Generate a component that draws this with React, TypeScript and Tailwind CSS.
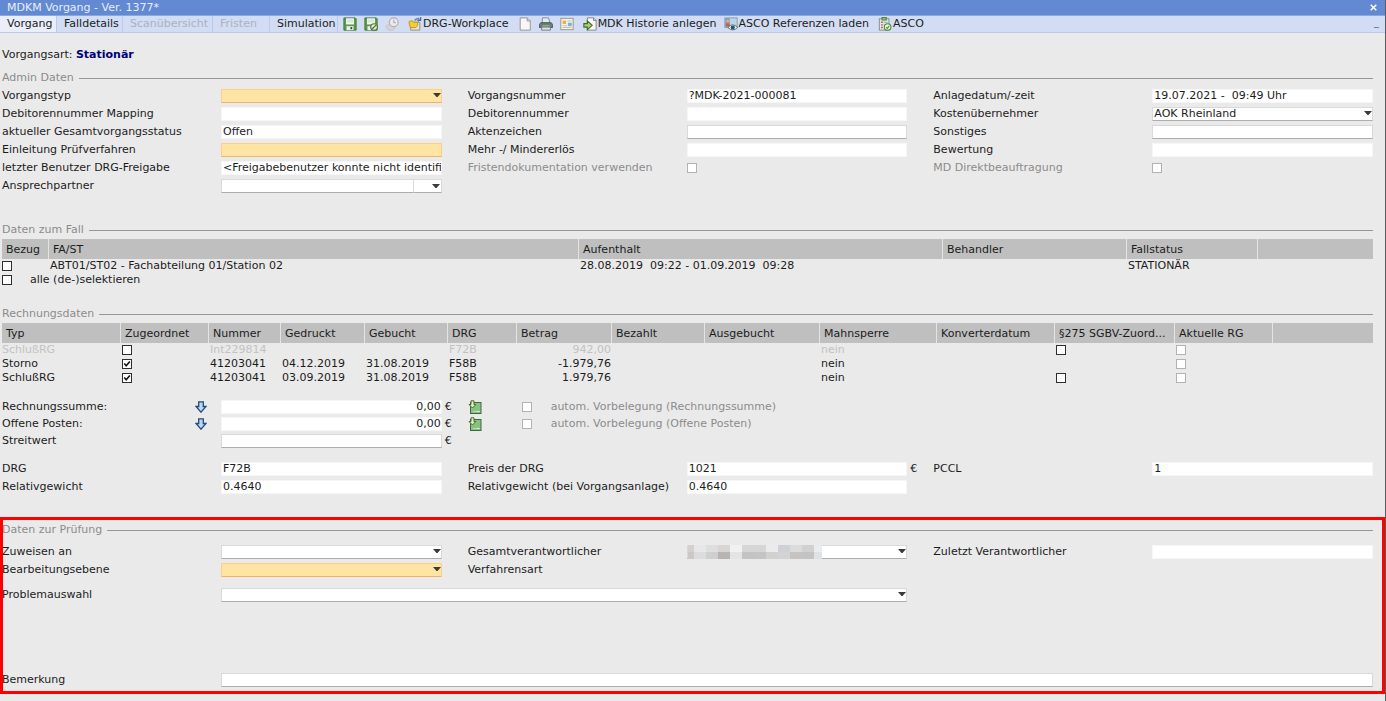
import React, { Fragment } from 'react';

type Tone = 'plain' | 'edit' | 'required';

interface FieldDef {
  id: string;
  label: string;
  value?: string;
  kind?: 'text' | 'select' | 'combo' | 'check' | 'none';
  tone?: Tone;
  unit?: string;
  masked?: boolean;
}

const GRID =
  'grid grid-cols-[219px_1fr_26px_219px_1fr_26px_219px_1fr] auto-rows-[14px] gap-y-1 items-center';

const toneClass: Record<Tone, string> = {
  plain: 'border-[#f6f6f6] bg-white',
  edit: 'border-[#d9d9d9] border-b-[#adadad] bg-white',
  required: 'border-[#fbcf87] border-b-[#f0b36b] bg-[#ffe4a4]',
};

const adminRows: (FieldDef | null)[][] = [
  [
    { id: 'vorgangstyp', label: 'Vorgangstyp', kind: 'select', tone: 'required' },
    { id: 'vorgangsnummer', label: 'Vorgangsnummer', value: '?MDK-2021-000081' },
    { id: 'anlage', label: 'Anlagedatum/-zeit', value: '19.07.2021 -  09:49 Uhr' },
  ],
  [
    { id: 'debMapping', label: 'Debitorennummer Mapping' },
    { id: 'debitor', label: 'Debitorennummer' },
    { id: 'kosten', label: 'Kostenübernehmer', value: 'AOK Rheinland', kind: 'select', tone: 'edit' },
  ],
  [
    { id: 'status', label: 'aktueller Gesamtvorgangsstatus', value: 'Offen' },
    { id: 'akten', label: 'Aktenzeichen', tone: 'edit' },
    { id: 'sonstiges', label: 'Sonstiges', tone: 'edit' },
  ],
  [
    { id: 'einleitung', label: 'Einleitung Prüfverfahren', tone: 'required' },
    { id: 'erloes', label: 'Mehr -/ Mindererlös' },
    { id: 'bewertung', label: 'Bewertung' },
  ],
  [
    {
      id: 'freigabe',
      label: 'letzter Benutzer DRG-Freigabe',
      value: '<Freigabebenutzer konnte nicht identifi',
    },
    { id: 'fristendoku', label: 'Fristendokumentation verwenden', kind: 'check' },
    { id: 'direkt', label: 'MD Direktbeauftragung', kind: 'check' },
  ],
  [{ id: 'partner', label: 'Ansprechpartner', kind: 'combo', tone: 'edit' }, null, null],
];

const drgRows: (FieldDef | null)[][] = [
  [
    { id: 'drg', label: 'DRG', value: 'F72B' },
    { id: 'preis', label: 'Preis der DRG', value: '1021', unit: '€' },
    { id: 'pccl', label: 'PCCL', value: '1' },
  ],
  [
    { id: 'relativ', label: 'Relativgewicht', value: '0.4640' },
    { id: 'relativAnlage', label: 'Relativgewicht (bei Vorgangsanlage)', value: '0.4640' },
    null,
  ],
];

const checkRows: (FieldDef | null)[][] = [
  [
    { id: 'zuweisen', label: 'Zuweisen an', kind: 'select', tone: 'edit' },
    { id: 'gesamt', label: 'Gesamtverantwortlicher', kind: 'select', tone: 'edit', masked: true },
    { id: 'zuletzt', label: 'Zuletzt Verantwortlicher' },
  ],
  [
    { id: 'ebene', label: 'Bearbeitungsebene', kind: 'select', tone: 'required' },
    { id: 'verfahren', label: 'Verfahrensart', kind: 'none' },
    null,
  ],
];

const invoices = [
  { typ: 'SchlußRG', zu: false, nr: 'Int229814', gedruckt: '', gebucht: '', drg: 'F72B', betrag: '942,00', par: true, off: true },
  { typ: 'Storno', zu: true, nr: '41203041', gedruckt: '04.12.2019', gebucht: '31.08.2019', drg: 'F58B', betrag: '-1.979,76', par: false, off: false },
  { typ: 'SchlußRG', zu: true, nr: '41203041', gedruckt: '03.09.2019', gebucht: '31.08.2019', drg: 'F58B', betrag: '1.979,76', par: true, off: false },
];

const Checkbox: React.FC<{ id?: string; label?: string; checked?: boolean; disabled?: boolean }> = ({
  id,
  label,
  checked,
  disabled,
}) => (
  <span className="relative block size-[10px] shrink-0">
    <input
      id={id}
      type="checkbox"
      aria-label={label}
      defaultChecked={checked}
      disabled={disabled}
      className="peer block size-[10px] appearance-none border border-[#2e2e2e] bg-white disabled:border-[#b2b2b2]"
    />
    <svg
      viewBox="0 0 10 10"
      className="pointer-events-none absolute inset-0 hidden size-[10px] peer-checked:block"
    >
      <path d="M2.3 4.6 L4.2 6.8 L7.8 2.6" fill="none" stroke="#111" strokeWidth="1.6" />
    </svg>
  </span>
);

const Caret = () => (
  <svg
    viewBox="0 0 8 4"
    className="pointer-events-none absolute top-[4px] right-[1px] h-[4px] w-[8px]"
  >
    <path d="M0 0h8L4.5 4h-1z" fill="#3a3a3a" />
  </svg>
);

const maskTop = ['#d5d0d0', '#e6e7e8', '#dedede', '#d9d5d3', '#f1f1f1', '#d6d6d7', '#d5d6d7', '#ebebeb', '#d0d1d6', '#dcdcdc', '#d1d1d2', '#e9ebec'];
const maskBottom = ['#ccc8c8', '#dcdcdd', '#cfcfcf', '#b9b4b4', '#e2e4e6', '#c3c3c3', '#c4c4c4', '#d1d1d1', '#d3d3d3', '#c5c4c3', '#c3c3c3', '#dee2e5'];

const Mask = () => (
  <svg
    viewBox="0 0 134 14"
    className="pointer-events-none absolute top-0 left-[1px] h-[14px] w-[134px]"
    shapeRendering="crispEdges"
  >
    {maskTop.map((c, i) => (
      <Fragment key={i}>
        <rect x={i * 12 - 6} y="0" width={i === 11 ? 8 : 12} height="7" fill={c} />
        <rect x={i * 12 - 6} y="7" width={i === 11 ? 8 : 12} height="7" fill={maskBottom[i]} />
      </Fragment>
    ))}
  </svg>
);

const SelectBox: React.FC<{ id: string; value?: string; tone?: Tone; masked?: boolean }> = ({
  id,
  value = '',
  tone = 'edit',
  masked,
}) => (
  <div className="relative">
    <select
      id={id}
      defaultValue={value}
      className={`block h-[14px] w-full appearance-none border pl-[1px] leading-[12px] ${toneClass[tone]}`}
    >
      <option value={value}>{value}</option>
    </select>
    {masked && <Mask />}
    <Caret />
  </div>
);

const TextBox: React.FC<{ id: string; value?: string; tone?: Tone; right?: boolean }> = ({
  id,
  value = '',
  tone = 'plain',
  right,
}) => (
  <input
    id={id}
    type="text"
    defaultValue={value}
    className={`block h-[14px] w-full min-w-0 border pb-[2px] pl-[1px] leading-[12px] ${right ? 'text-right' : ''} ${toneClass[tone]}`}
  />
);

const Control: React.FC<{ field: FieldDef }> = ({ field }) => {
  const { id, label, value, kind = 'text', tone, masked } = field;
  if (kind === 'none') return <span />;
  if (kind === 'check') return <Checkbox id={id} disabled />;
  if (kind === 'select') return <SelectBox id={id} value={value} tone={tone} masked={masked} />;
  if (kind === 'combo') {
    return (
      <div className="flex">
        <TextBox id={id} tone={tone} />
        <button
          type="button"
          aria-label={`${label} auswählen`}
          className={`relative h-[14px] w-[28px] shrink-0 border border-l-0 ${toneClass.edit}`}
        >
          <Caret />
        </button>
      </div>
    );
  }
  return <TextBox id={id} value={value} tone={tone} />;
};

const FormGrid: React.FC<{ rows: (FieldDef | null)[][]; className?: string }> = ({
  rows,
  className = '',
}) => (
  <div className={`${GRID} ${className}`}>
    {rows.map((row, r) =>
      row.map((field, i) => (
        <Fragment key={`${r}-${i}`}>
          {field && field.kind === 'none' && <span>{field.label}</span>}
          {field && field.kind !== 'none' && (
            <label htmlFor={field.id} className={field.kind === 'check' ? 'text-[#8c8c8c]' : ''}>
              {field.label}
            </label>
          )}
          {!field && <span />}
          {field ? <Control field={field} /> : <span />}
          {i < 2 && <span className="pl-[3px]">{field?.unit}</span>}
        </Fragment>
      )),
    )}
  </div>
);

const Heading: React.FC<{ children: string; className?: string }> = ({ children, className = '' }) => (
  <div className={`flex items-center gap-[5px] ${className}`}>
    <h2 className="text-[#8c8c8c]">{children}</h2>
    <div className="h-px flex-1 bg-[#979797]" />
  </div>
);

// Toolbar glyphs
const Disk = () => (
  <>
    <path d="M1 1h13l1 1v13H1z" fill="#5d9a51" stroke="#3c7436" />
    <rect x="3.5" y="1.5" width="9" height="7" fill="#f4f8f3" />
    <path d="M4.5 3.5h7M4.5 5.5h7" stroke="#c9d5c7" />
    <rect x="4" y="10.5" width="8" height="4.5" fill="#e9efe8" />
    <rect x="8.5" y="11.5" width="2" height="2.5" fill="#2d5a2a" />
  </>
);

const Icon: React.FC<{ children: React.ReactNode }> = ({ children }) => (
  <svg viewBox="0 0 16 16" className="size-[14px] shrink-0" aria-hidden="true">
    {children}
  </svg>
);

const SaveIcon = () => (
  <Icon>
    <Disk />
  </Icon>
);

const SaveCheckIcon = () => (
  <Icon>
    <Disk />
    <circle cx="11.5" cy="11.5" r="3.8" fill="#dfe9d5" stroke="#557a38" strokeWidth="1.4" />
    <path d="M9.3 13.7l4.4-4.4" stroke="#557a38" strokeWidth="1.5" />
  </Icon>
);

const ClockIcon = () => (
  <Icon>
    <path d="M1 11l5-4 6 5-3 3H4z" fill="#d4d4d4" stroke="#c2c2c2" />
    <circle cx="10" cy="6" r="5" fill="#ececec" stroke="#b0b0b0" strokeWidth="1.3" />
    <path d="M10 3v3.5h2.500" fill="none" stroke="#9a9a9a" />
  </Icon>
);

const FolderIcon = () => (
  <Icon>
    <path d="M7 3l5-2v5" fill="#cbdcef" stroke="#8ba3bf" />
    <path d="M8 4q2-3 6-1.500M14.500 0v4h-4" fill="none" stroke="#41719f" strokeWidth="1.300" />
    <path d="M3 6h10.500v9H3z" fill="#e6e2cf" stroke="#8d8a72" />
    <path d="M1 6l1-1.500h3.500L6.500 6H11v3.500l-2 2.500H2.500z" fill="#f4ce31" stroke="#b8961f" />
  </Icon>
);

const PageIcon = () => (
  <Icon>
    <path d="M2.5 1h8l3.500 3.500V15H2.500z" fill="#f7f7f7" stroke="#8b8b8b" />
    <path d="M10.500 1v3.500H14" fill="#dcdcdc" stroke="#8b8b8b" />
  </Icon>
);

const PrintIcon = () => (
  <Icon>
    <path d="M4 1h7l1.500 6H3.500z" fill="#e3eaf0" stroke="#7d868c" />
    <path d="M2 6.500h12l1.500 2V12h-15V8.500z" fill="#6d7a80" stroke="#46535a" />
    <path d="M3 11.500h10V15H3z" fill="#dfe4e6" stroke="#6b767b" />
    <path d="M4 10h8" stroke="#7cc16f" strokeWidth="1.500" />
  </Icon>
);

const FormIcon = () => (
  <Icon>
    <rect x="1" y="1.500" width="14" height="13" fill="#f5f3e8" stroke="#8f8f85" />
    <rect x="3" y="4" width="4" height="4" fill="#e7b04d" />
    <path d="M8.500 4.500H13M3 10h5M3 12h10" stroke="#b5baba" />
    <rect x="9" y="6.500" width="4.500" height="4" fill="#7fb0d8" />
  </Icon>
);

const ImportIcon = () => (
  <Icon>
    <path d="M5 1h7l3 3v11H5z" fill="#f7f7f7" stroke="#7d7d7d" />
    <path d="M12 1v3h3" fill="none" stroke="#7d7d7d" />
    <path d="M1 7.500h4V4.500L10.500 9.500 5 14.500v-3H1z" fill="#a7d173" stroke="#3f6d24" strokeWidth="1.300" />
  </Icon>
);

const ViewIcon = () => (
  <Icon>
    <rect x="1" y="1" width="14" height="11" fill="#b9d4ea" stroke="#8297a8" />
    <rect x="1.500" y="1.500" width="5" height="10" fill="#8b9aa8" />
    <circle cx="4.200" cy="4.500" r="1.500" fill="#e8b199" />
    <path d="M2 7.500h4.500v3H2z" fill="#c5604b" />
    <path d="M4.500 12q5.500-6 11 0-5.500 5.500-11 0z" fill="#fff" stroke="#4f6b2c" />
    <circle cx="10" cy="12" r="2.400" fill="#1f4fa5" />
  </Icon>
);

const ClipboardIcon = () => (
  <Icon>
    <rect x="1.500" y="2" width="11" height="13" fill="#dfe9e6" stroke="#6f8f86" />
    <rect x="4.500" y=".5" width="5" height="3" fill="#8dbb6e" stroke="#4f7a3c" />
    <path d="M3.500 6h2M3.500 9h2M3.500 12h2" stroke="#d2563f" strokeWidth="1.500" />
    <path d="M6.500 6H11M6.500 9H9" stroke="#8aa0b4" />
    <circle cx="11" cy="11.500" r="3.800" fill="#e9f3e0" stroke="#4d8a35" strokeWidth="1.200" />
    <path d="M9.200 11.500l1.500 1.500 2.300-3" fill="none" stroke="#4d8a35" strokeWidth="1.200" />
  </Icon>
);

const DownIcon = () => (
  <svg viewBox="0 0 12 12" className="size-[12px]" aria-hidden="true">
    <path d="M3.700.8h4.600v4.700h2.700L6 11.200 1 5.500h2.700z" fill="#b9d8f2" stroke="#27497c" strokeWidth="1.300" />
  </svg>
);

const TakeOverIcon = () => (
  <svg viewBox="0 0 14 14" className="size-[14px]" aria-hidden="true">
    <rect x="2.500" y="2.500" width="10.500" height="11" fill="#86c282" stroke="#44663f" />
    <path d="M5 11.500h6" stroke="#b7dfb2" />
    <rect x="9.500" y="11" width="2" height="1" fill="#e9f5e7" />
    <path d="M3 .8h3v3.700h1.800L4.500 8 1 4.500h2z" fill="#dbf0c8" stroke="#4a6b22" />
  </svg>
);

const tabs = [
  { title: 'Vorgang', width: 'w-[57px]', state: 'active' },
  { title: 'Falldetails', width: 'w-[66px]', state: '' },
  { title: 'Scanübersicht', width: 'w-[90px]', state: 'disabled' },
  { title: 'Fristen', width: 'w-[57px]', state: 'disabled' },
  { title: 'Simulation', width: 'w-[68px]', state: '' },
];

const iconButton = 'flex h-[14px] items-center gap-px';

const Toolbar = () => (
  <div className="flex h-[17px] items-center border-b border-[#b9cbec] bg-[#d2dcf2]">
    <div className="flex h-full">
      {tabs.map((tab) => (
        <button
          key={tab.title}
          type="button"
          disabled={tab.state === 'disabled'}
          className={`h-full shrink-0 border-r border-[#b9cbec] pl-[7px] text-left leading-[16px] whitespace-nowrap disabled:text-[#aab2c3] ${tab.width} ${tab.state === 'active' ? 'bg-[#e9eefa]' : ''}`}
        >
          {tab.title}
        </button>
      ))}
    </div>
    <div className="flex items-center gap-[7px] pl-[5px]">
      <button type="button" aria-label="Speichern" className={iconButton}>
        <SaveIcon />
      </button>
      <button type="button" aria-label="Speichern und schließen" className={iconButton}>
        <SaveCheckIcon />
      </button>
      <button type="button" aria-label="Wiedervorlage" className={iconButton}>
        <ClockIcon />
      </button>
    </div>
    <button type="button" className={`${iconButton} ml-[9px]`}>
      <FolderIcon />
      DRG-Workplace
    </button>
    <div className="flex items-center gap-[7px] pl-[9px]">
      <button type="button" aria-label="Neu" className={iconButton}>
        <PageIcon />
      </button>
      <button type="button" aria-label="Drucken" className={iconButton}>
        <PrintIcon />
      </button>
      <button type="button" aria-label="Formular" className={iconButton}>
        <FormIcon />
      </button>
    </div>
    <button type="button" className={`${iconButton} ml-[9px]`}>
      <ImportIcon />
      MDK Historie anlegen
    </button>
    <button type="button" className={`${iconButton} ml-[7px]`}>
      <ViewIcon />
      ASCO Referenzen laden
    </button>
    <button type="button" className={`${iconButton} ml-[9px]`}>
      <ClipboardIcon />
      ASCO
    </button>
    <button
      type="button"
      aria-label="Minimieren"
      className="mr-[6px] ml-auto flex h-[14px] w-[5px] items-end pb-[3px]"
    >
      <span className="h-px w-[5px] bg-[#5b86d2]" />
    </button>
  </div>
);

const th = 'h-[20px] border-l border-[#e4e4e4] px-1 pt-[2px] text-left font-normal truncate first:border-l-0';
const td = 'h-[14px] py-0 pl-[2px] align-middle whitespace-nowrap';

const CaseTable = () => (
  <table className="mt-[2px] w-full table-fixed border-separate border-spacing-0">
    <colgroup>
      <col className="w-[46px]" />
      <col className="w-[530px]" />
      <col className="w-[364px]" />
      <col className="w-[184px]" />
      <col className="w-[131px]" />
      <col />
    </colgroup>
    <thead className="bg-[#bfbfbf]">
      <tr>
        {['Bezug', 'FA/ST', 'Aufenthalt', 'Behandler', 'Fallstatus', ''].map((h, i) => (
          <th key={i} className={th}>
            {h}
          </th>
        ))}
      </tr>
    </thead>
    <tbody>
      <tr>
        <td className="h-[14px] p-0">
          <Checkbox label="Fall auswählen" />
        </td>
        <td className={td}>ABT01/ST02 - Fachabteilung 01/Station 02</td>
        <td className={`${td} whitespace-pre`}>{'28.08.2019  09:22 - 01.09.2019  09:28'}</td>
        <td />
        <td className={td}>STATIONÄR</td>
        <td />
      </tr>
    </tbody>
  </table>
);

const InvoiceTable = () => (
  <table className="mt-[2px] w-full table-fixed border-separate border-spacing-0">
    <colgroup>
      <col className="w-[118px]" />
      <col className="w-[88px]" />
      <col className="w-[72px]" />
      <col className="w-[84px]" />
      <col className="w-[83px]" />
      <col className="w-[69px]" />
      <col className="w-[95px]" />
      <col className="w-[93px]" />
      <col className="w-[115px]" />
      <col className="w-[117px]" />
      <col className="w-[118px]" />
      <col className="w-[120px]" />
      <col className="w-[98px]" />
      <col />
    </colgroup>
    <thead className="bg-[#bfbfbf]">
      <tr>
        {[
          'Typ',
          'Zugeordnet',
          'Nummer',
          'Gedruckt',
          'Gebucht',
          'DRG',
          'Betrag',
          'Bezahlt',
          'Ausgebucht',
          'Mahnsperre',
          'Konverterdatum',
          '§275 SGBV-Zuord...',
          'Aktuelle RG',
          '',
        ].map((h, i) => (
          <th key={i} className={th}>
            {h}
          </th>
        ))}
      </tr>
    </thead>
    <tbody>
      {invoices.map((row, i) => (
        <tr key={i} className={row.off ? 'text-[#c2c2c2]' : ''}>
          <td className="h-[14px] p-0">{row.typ}</td>
          <td className={td}>
            <Checkbox label={`Zugeordnet ${i + 1}`} checked={row.zu} />
          </td>
          <td className={td}>{row.nr}</td>
          <td className={td}>{row.gedruckt}</td>
          <td className={td}>{row.gebucht}</td>
          <td className={td}>{row.drg}</td>
          <td className="h-[14px] p-0 text-right whitespace-nowrap">{row.betrag}</td>
          <td />
          <td />
          <td className={td}>nein</td>
          <td />
          <td className={td}>{row.par && <Checkbox label={`§275 Zuordnung ${i + 1}`} />}</td>
          <td className={td}>
            <Checkbox label={`Aktuelle RG ${i + 1}`} disabled />
          </td>
          <td />
        </tr>
      ))}
    </tbody>
  </table>
);

const sums = [
  { id: 'summe', label: 'Rechnungssumme:', auto: 'autom. Vorbelegung (Rechnungssumme)' },
  { id: 'posten', label: 'Offene Posten:', auto: 'autom. Vorbelegung (Offene Posten)' },
];

const SumBlock = () => (
  <div className="mt-[15px] grid auto-rows-[14px] grid-cols-[219px_1fr_26px_219px_1fr_26px_219px_1fr] items-center gap-y-[3px]">
    {sums.map((s) => (
      <Fragment key={s.id}>
        <div className="flex items-center justify-between pr-[14px]">
          <label htmlFor={s.id}>{s.label}</label>
          <button type="button" aria-label={`${s.label} übernehmen`}>
            <DownIcon />
          </button>
        </div>
        <TextBox id={s.id} value="0,00" right />
        <span className="pl-[3px]">€</span>
        <div className="col-span-5 flex items-center">
          <button type="button" aria-label={`${s.label} aktualisieren`} className="mr-10">
            <TakeOverIcon />
          </button>
          <Checkbox id={`${s.id}Auto`} disabled />
          <label htmlFor={`${s.id}Auto`} className="pl-[19px] text-[#8c8c8c]">
            {s.auto}
          </label>
        </div>
      </Fragment>
    ))}
    <label htmlFor="streitwert">Streitwert</label>
    <TextBox id="streitwert" tone="edit" />
    <span className="pl-[3px]">€</span>
  </div>
);

export default function App() {
  return (
    <div className="min-h-screen border-r border-[#5c5c5c] bg-[#eaeaea] font-['DejaVu_Sans',Verdana,sans-serif] text-[11px] leading-[14px] text-[#1c1c1c]">
      <header>
        <div className="flex h-[16px] items-center justify-between border-b border-[#89a8e2] bg-[#6289d2] pr-2 pl-[7px] text-[#e6edfa]">
          <h1>MDKM Vorgang - Ver. 1377*</h1>
          <button type="button" aria-label="Schließen">
            <svg viewBox="0 0 7 7" className="size-[7px]">
              <path d="M.7.7l5.600 5.600M6.300.7L.7 6.300" stroke="#fff" strokeWidth="1.500" />
            </svg>
          </button>
        </div>
        <Toolbar />
      </header>

      <main>
        <div className="pr-3 pl-[2px]">
          <p className="mt-[15px]">
            Vorgangsart: <strong className="text-[#00007c]">Stationär</strong>
          </p>

          <Heading className="mt-[9px]">Admin Daten</Heading>
          <FormGrid rows={adminRows} className="mt-1" />

          <Heading className="mt-[30px]">Daten zum Fall</Heading>
          <CaseTable />
          <div className="flex h-[14px] items-center">
            <Checkbox id="alle" />
            <label htmlFor="alle" className="pl-[18px]">
              alle (de-)selektieren
            </label>
          </div>

          <Heading className="mt-5">Rechnungsdaten</Heading>
          <InvoiceTable />
          <SumBlock />
          <FormGrid rows={drgRows} className="mt-[14px]" />
        </div>

        <section className="relative mt-[23px] pt-[6px] pr-3 pb-[7px] pl-[2px]">
          <Heading>Daten zur Prüfung</Heading>
          <FormGrid rows={checkRows} className="mt-2" />
          <div className={`${GRID} mt-[11px]`}>
            <label htmlFor="problem">Problemauswahl</label>
            <div className="col-span-4">
              <SelectBox id="problem" />
            </div>
          </div>
          <div className={`${GRID} mt-[71px]`}>
            <label htmlFor="bemerkung">Bemerkung</label>
            <div className="col-span-7">
              <TextBox id="bemerkung" tone="edit" />
            </div>
          </div>
          {/* highlight frame drawn over the section */}
          <div className="pointer-events-none absolute inset-0 border-3 border-[#fe0000]" />
        </section>
      </main>
    </div>
  );
}
